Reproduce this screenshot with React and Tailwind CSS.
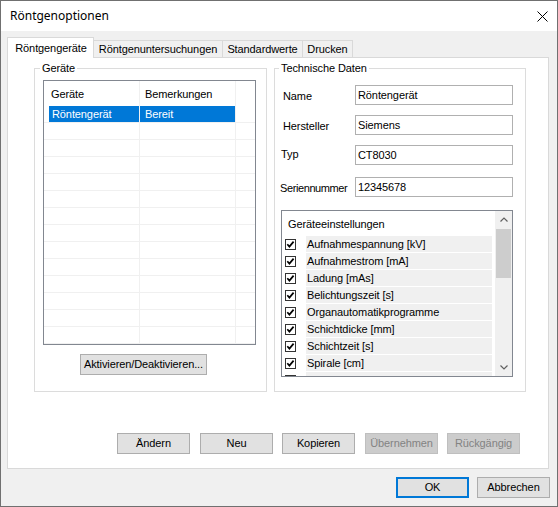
import React from "react";

const ui = "font-['Liberation_Sans',Arial,sans-serif] text-[11px] leading-[13px] tracking-[-0.1px] text-black";

function Btn({ children, className = "", disabled = false }) {
  return (
    <button
      className={`flex items-center justify-center h-[21px] w-[73px] border ${
        disabled ? "bg-[#cccccc] border-[#bfbfbf] text-[#838383]" : "bg-[#e1e1e1] border-[#adadad] text-black"
      } ${className}`}
    >
      {children}
    </button>
  );
}

function Check() {
  return (
    <div className="w-[11px] h-[11px] border border-[#333333] bg-white flex items-center justify-center shrink-0">
      <svg width="9" height="9" viewBox="0 0 9 9">
        <path d="M1.3 4.3 L3.4 6.6 L7.6 1.6" fill="none" stroke="#000" strokeWidth="1.7" />
      </svg>
    </div>
  );
}

const fields = [
  { label: "Name", value: "Röntengerät", row: "mt-[10px]", lab: "pl-[8px] pt-[5px]" },
  { label: "Hersteller", value: "Siemens", row: "mt-[10px]", lab: "pl-[8px] pt-[5px]" },
  { label: "Typ", value: "CT8030", row: "mt-[10px]", lab: "pl-[6px] pt-[3px]" },
  { label: "Seriennummer", value: "12345678", row: "mt-[12px]", lab: "pl-[5px] pt-[5px] tracking-[-0.4px]" },
];

const settings = [
  "Aufnahmespannung [kV]",
  "Aufnahmestrom [mA]",
  "Ladung [mAs]",
  "Belichtungszeit [s]",
  "Organautomatikprogramme",
  "Schichtdicke [mm]",
  "Schichtzeit [s]",
  "Spirale [cm]",
  "",
];

export default function App() {
  const emptyRows = Array.from({ length: 13 });

  return (
    <div className={`w-[558px] h-[507px] border border-[#707070] flex flex-col overflow-hidden ${ui}`}>
      {/* Title bar */}
      <div className="h-[30px] bg-white flex items-center justify-between pl-[9px] pr-[9px] shrink-0">
        <span className="font-['Noto_Sans',sans-serif] text-[12px] leading-[16px] tracking-normal">Röntgenoptionen</span>
        <svg width="11" height="11" viewBox="0 0 11 11">
          <path d="M0.5 0.5 L10.5 10.5 M10.5 0.5 L0.5 10.5" stroke="#000" strokeWidth="1" />
        </svg>
      </div>

      {/* Body */}
      <div className="flex-1 bg-[#f0f0f0] pt-[6px] pl-[6px] flex flex-col">
        {/* Tabs */}
        <div className="flex items-end h-[20px]">
          <div className="relative z-10 -mb-px h-[21px] w-[87px] border border-b-0 border-[#d9d9d9] bg-white flex items-center justify-center pl-px">
            Röntgengeräte
          </div>
          <div className="h-[17px] w-[129px] border-t border-r border-[#d9d9d9] flex items-center justify-center pt-px">
            Röntgenuntersuchungen
          </div>
          <div className="h-[17px] w-[80px] border-t border-r border-[#d9d9d9] flex items-center justify-center pt-px">
            Standardwerte
          </div>
          <div className="h-[17px] w-[50px] border-t border-r border-[#d9d9d9] flex items-center justify-center pt-px">
            Drucken
          </div>
        </div>

        {/* Tab panel */}
        <div className="w-[542px] h-[412px] border border-[#d9d9d9] bg-white flex flex-col shrink-0">
          <div className="flex mt-[4px] ml-[26px]">
            {/* Geräte */}
            <fieldset className="w-[233px] h-[330px] border border-[#dcdcdc]">
              <legend className="ml-[5px] px-[2px]">Geräte</legend>
              <div className="flex flex-col pl-[8px] mt-[5px]">
                <div className="w-[213px] h-[265px] border border-[#828790] bg-white overflow-hidden">
                  <div className="flex h-[25px]">
                    <div className="w-[96px] border-r border-[#f0f0f0] pl-[7px] pt-[7px]">Geräte</div>
                    <div className="w-[96px] border-r border-[#f0f0f0] pl-[5px] pt-[7px]">Bemerkungen</div>
                    <div className="flex-1" />
                  </div>
                  <div className="flex h-[17px] border-b border-[#f0f0f0]">
                    <div className="w-[96px] border-r border-[#f0f0f0] pl-[5px]">
                      <div className="h-full bg-[#0078d7] text-white pl-[3px] pt-[2px]">Röntengerät</div>
                    </div>
                    <div className="w-[96px] border-r border-[#f0f0f0]">
                      <div className="h-full bg-[#0078d7] text-white pl-[5px] pt-[2px]">Bereit</div>
                    </div>
                    <div className="flex-1" />
                  </div>
                  {emptyRows.map((_, i) => (
                    <div key={i} className="flex h-[17px] border-b border-[#f0f0f0]">
                      <div className="w-[96px] border-r border-[#f0f0f0]" />
                      <div className="w-[96px] border-r border-[#f0f0f0]" />
                      <div className="flex-1" />
                    </div>
                  ))}
                </div>
                <Btn className="w-[127px] ml-[37px] mt-[9px]">Aktivieren/Deaktivieren...</Btn>
              </div>
            </fieldset>

            {/* Technische Daten */}
            <fieldset className="w-[252px] h-[330px] border border-[#dcdcdc] ml-[7px]">
              <legend className="ml-[4px] px-[2px]">Technische Daten</legend>
              <div className="flex flex-col">
                {fields.map((f) => (
                  <div key={f.label} className={`flex h-[20px] ${f.row}`}>
                    <div className={`w-[80px] ${f.lab}`}>{f.label}</div>
                    <div className="w-[158px] h-[20px] border border-[#b0b0b0] bg-white flex items-center pl-[2px]">
                      {f.value}
                    </div>
                  </div>
                ))}

                {/* Geräteeinstellungen */}
                <div className="ml-[6px] mt-[13px] w-[232px] h-[167px] border border-[#828790] bg-white flex overflow-hidden">
                  <div className="flex-1 flex flex-col overflow-hidden">
                    <div className="h-[25px] shrink-0 pl-[6px] pt-[7px]">Geräteeinstellungen</div>
                    {settings.map((s, i) => (
                      <div key={i} className="flex h-[17px] shrink-0 border-b border-white">
                        <div className="pl-[3px] flex items-center">
                          <Check />
                        </div>
                        <div className="flex-1 ml-[10px] mr-[3px] bg-[#f0f0f0] pl-[1px] flex items-center">
                          {s}
                        </div>
                      </div>
                    ))}
                  </div>
                  <div className="w-[17px] bg-[#f0f0f0] flex flex-col shrink-0">
                    <div className="h-[17px] flex items-center justify-center">
                      <svg width="8" height="5" viewBox="0 0 8 5">
                        <path d="M0.5 4.5 L4 1 L7.5 4.5" fill="none" stroke="#606060" strokeWidth="1.2" />
                      </svg>
                    </div>
                    <div className="h-[49px] mt-px mx-px bg-[#cdcdcd]" />
                    <div className="flex-1" />
                    <div className="h-[17px] flex items-center justify-center">
                      <svg width="8" height="5" viewBox="0 0 8 5">
                        <path d="M0.5 0.5 L4 4 L7.5 0.5" fill="none" stroke="#606060" strokeWidth="1.2" />
                      </svg>
                    </div>
                  </div>
                </div>
              </div>
            </fieldset>
          </div>

          {/* Action buttons */}
          <div className="flex mt-[41px] ml-[109px]">
            <Btn>Ändern</Btn>
            <Btn className="ml-[10px]">Neu</Btn>
            <Btn className="ml-[9px]">Kopieren</Btn>
            <Btn className="ml-[10px]" disabled>Übernehmen</Btn>
            <Btn className="ml-[9px]" disabled>Rückgängig</Btn>
          </div>
        </div>

        {/* Dialog buttons */}
        <div className="flex justify-end mt-[8px] pr-[7px] gap-[8px]">
          <button className="flex items-center justify-center h-[21px] w-[73px] border-2 border-[#0078d7] bg-[#e1e1e1]">
            OK
          </button>
          <Btn>Abbrechen</Btn>
        </div>
      </div>
    </div>
  );
}
